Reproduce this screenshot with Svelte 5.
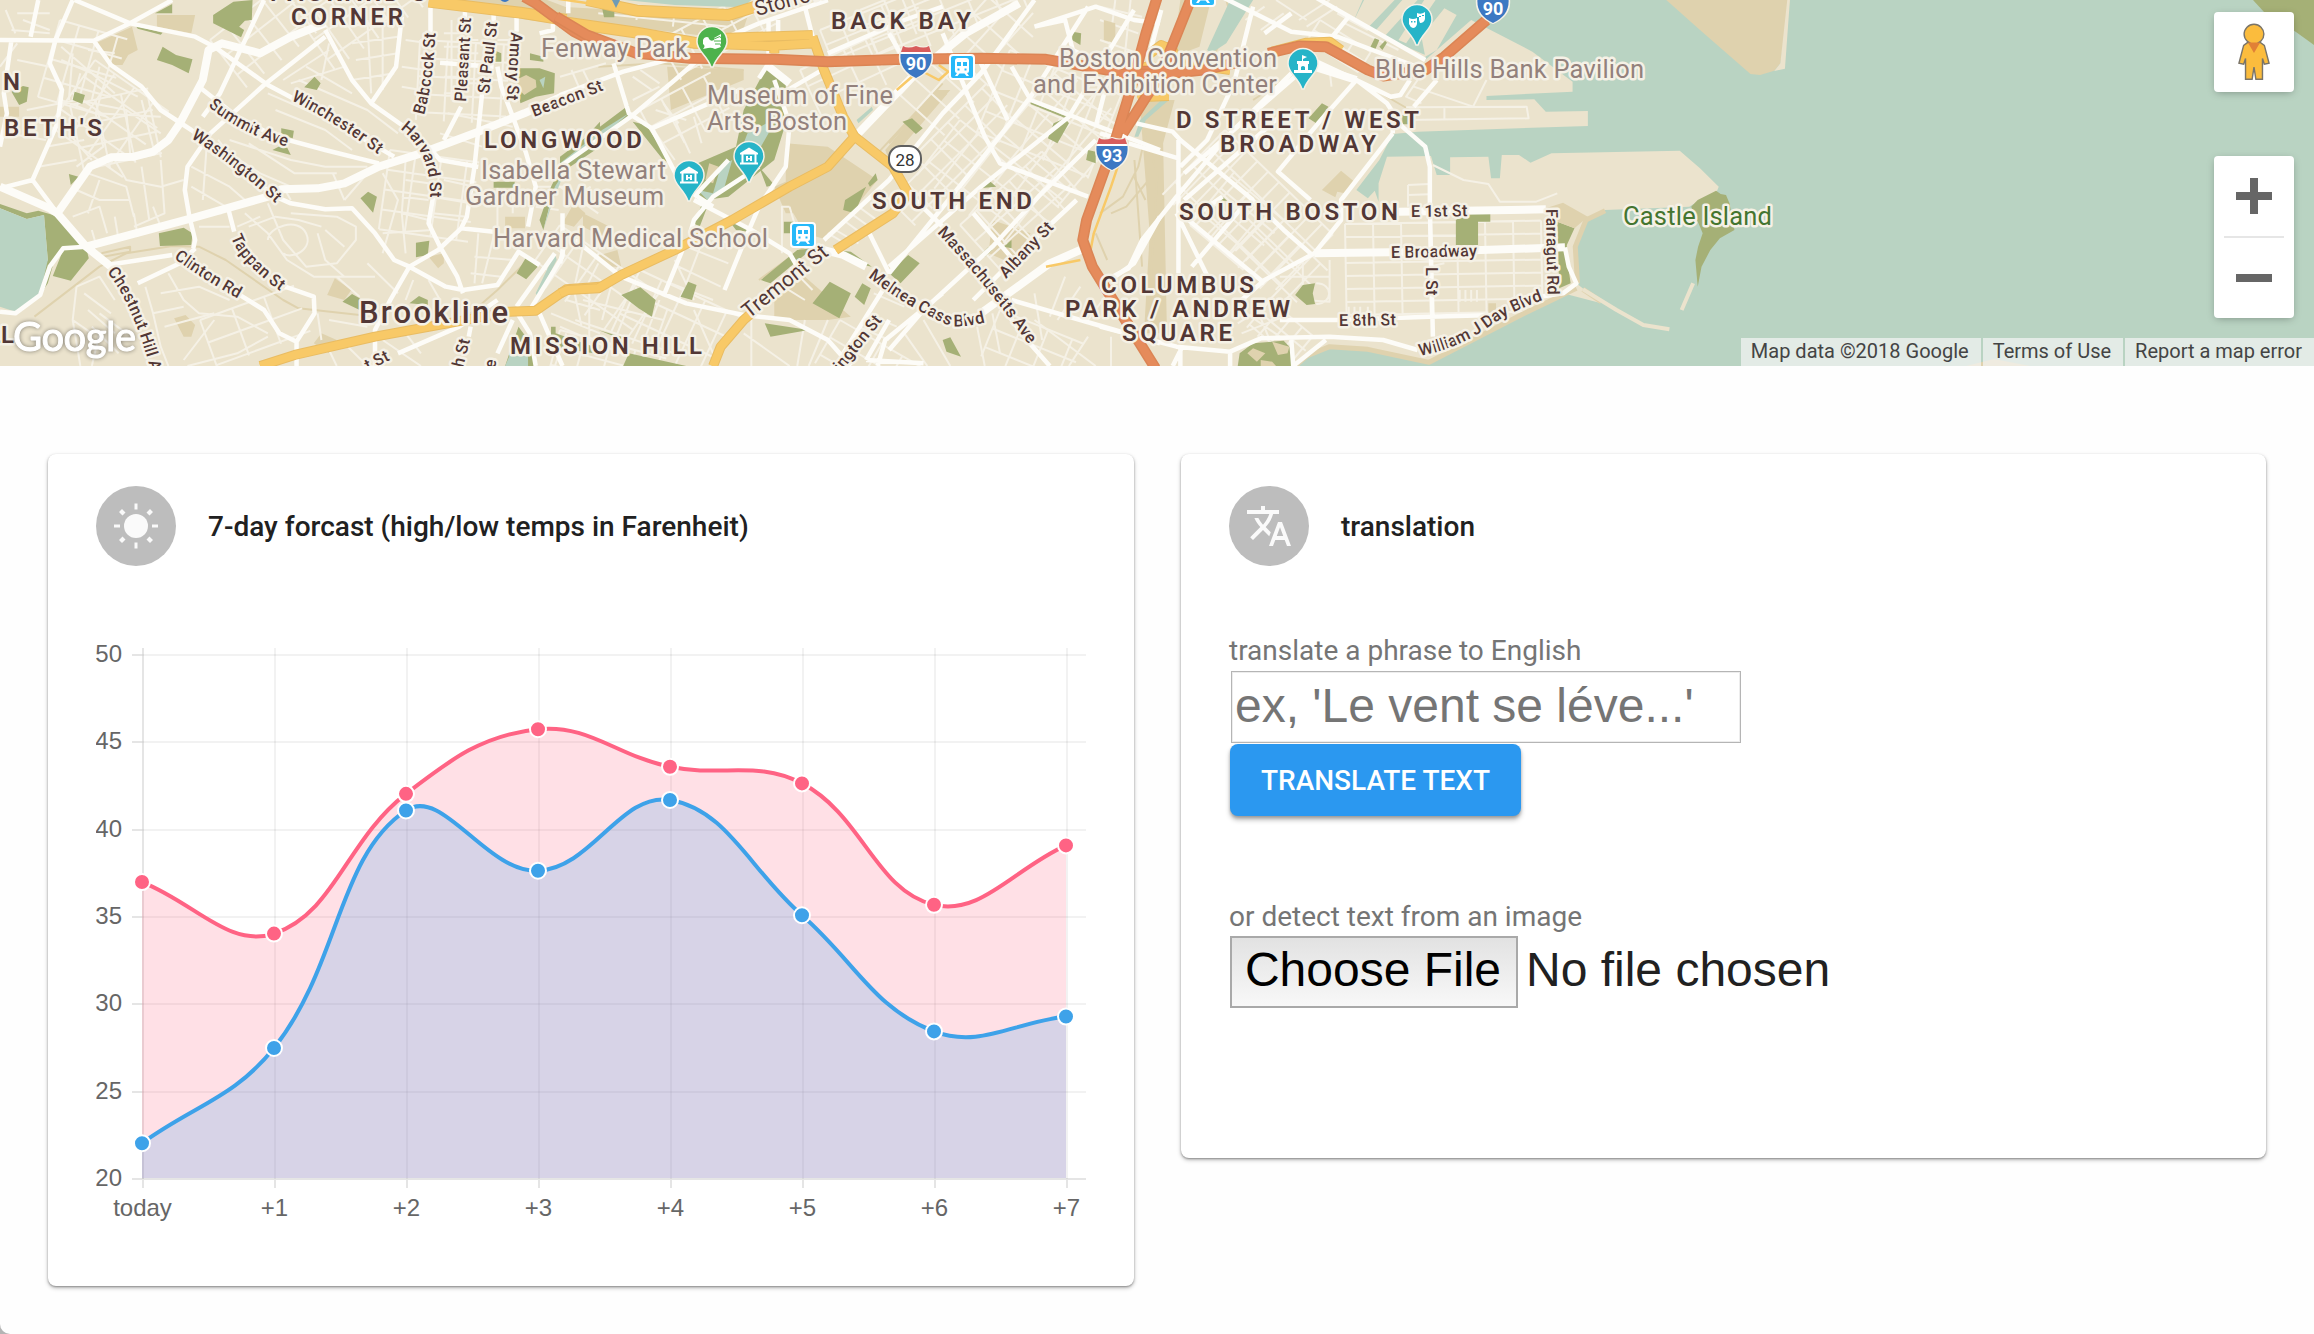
<script>
  const tiles = [
    {
      x: 0,
      beige: 'M250 130L345 80L360 150L335 165L320 195L290 195ZM410 45L510 45L500 100L410 80ZM455 955L485 945L510 975L500 1010L480 1010ZM855 885L875 835L918 870L900 900ZM1320 650h52v35h-52zM1140 20L1568 90V60L1430 0H1140ZM1120 770L1160 760V790L1145 805ZM820 1030L840 1000L880 1020L860 1060ZM1470 670L1500 610L1530 640L1500 680ZM0 320H50V350H0Z',
      parks: 'M0 612L70 640L100 632L155 650L218 735L165 745L140 790L125 850L105 885L60 930L40 940L125 780L115 645L70 657L0 625ZM138 828L165 750L225 742L232 775L185 842ZM557 45L610 5L660 0L658 60L640 62L625 80L638 90L630 112L557 70ZM425 140L460 165L503 178L493 220L450 195L410 180ZM405 40L450 12L450 40ZM355 78L425 98L420 104L360 86ZM795 262L822 230L838 250L828 270ZM735 385L768 392L765 415L735 405ZM712 450L745 430L760 465ZM30 275L60 258L75 262L70 305L50 315ZM195 275L222 285L215 312L190 300ZM415 700L480 683L503 700L500 735L418 738ZM180 522L205 530L185 555ZM942 595L962 575L985 590L975 638ZM1087 728L1122 722L1118 765L1087 772ZM895 905L920 882L940 895V930ZM1070 910L1095 888L1118 900V915ZM1350 820L1375 772L1405 800L1375 838ZM1345 205L1410 205L1450 220L1448 280L1400 290L1360 310ZM1290 545h55v18h-55zM1385 160L1420 170V185L1385 180ZM1475 480L1568 365V440L1490 500L1465 530L1440 600L1420 690L1410 660L1440 560ZM1290 150L1310 160V185H1290ZM1320 1098L1355 980L1400 1050V1098ZM1440 980h12v20l100 40v20l-112-20z',
      sand: 'M1348 240L1375 225L1400 240L1402 262L1370 285L1358 270Z',
      water: 'M0 625L70 657L115 645L125 780L105 880L40 935L0 920ZM1320 1098L1345 1030L1380 1070V1098ZM1420 690L1450 560L1500 470L1510 455L1480 500L1440 620ZM1400 880L1450 760L1455 780L1405 890ZM1410 240L1425 230L1420 265Z',
      rail: 'M90 950L260 800L330 760L450 738L520 740L590 780L740 900L780 925L940 945M265 760L340 740V755L270 770M1210 960L1300 870L1380 780',
      local:
        'M0 200L45 130M15 30L40 100M45 40H130M60 60L130 90M30 90L130 100M45 180L130 200M160 180L240 220L360 290M160 140L300 280M190 160L180 300M230 150L300 160M210 220L190 300M260 200L240 300M70 330L200 300L330 330L420 400M160 300L250 340L270 440L200 500M250 340L420 350M180 400L240 480M120 440L220 420M330 330L340 460M370 300L400 440M100 500L200 480M300 480L330 540L420 560L480 540M230 520L330 560L350 650M200 570L260 600L340 600M190 650L260 620L280 700M420 480L430 640L350 680M260 540L230 640M370 500L390 660M20 400L120 420M600 420L760 480L850 500L960 500M640 380L720 420M650 430L770 520L880 520M600 460L680 520L760 560M500 500L600 560L640 600M500 560L590 620M540 440L530 600M570 420L640 520M740 240L860 150M760 250L900 200M800 200L920 280M860 130L840 240M700 280L860 360L940 420M720 330L850 390L920 450M780 240L960 330L1040 400M900 80L1040 60M920 130L1040 110M930 180L1040 160M960 60L970 280M1000 40L1000 270M920 240L1030 220M1060 120L1120 130M1050 200L1110 210M1050 260L1100 270M1160 100L1210 100M1160 140H1210M1160 230H1210M1160 280H1200M1180 60V300M1225 120H1250M1225 160H1250M1225 200H1250M1225 250H1250M1300 120H1330M1170 340L1340 380M1150 400L1260 440M1240 560L1160 540M1130 590L1230 610M1130 640L1220 650M1060 480L1050 640L1060 760M1000 520L1040 600L1000 760M960 520L900 600M1060 540L1120 550M1050 590L1120 600M1050 640L1120 660M1000 700L1130 690M870 520L900 600M740 560L760 600M700 610L740 720L800 800L880 790L930 720L930 680L880 650L760 640M640 640L700 700L750 780L820 830L900 830M650 680L720 650L780 660L840 680M700 720C700 680 780 650 800 700S760 780 740 760M620 680L680 650M640 700L620 740M520 640L580 640M520 680H600M400 620L420 680M300 650L310 720M350 640L360 710M240 690L250 730M830 700L850 780L900 830L980 830M850 690L900 740M930 640L980 700M960 790L1040 880M880 830L940 890M380 860L400 940L420 1040L440 1098M440 820L480 900L520 940L620 950L700 1000M420 880L520 860L600 900M400 940L480 920M430 980L560 940M200 860L190 960L210 1098M200 860L260 830L300 900M220 880L290 940M230 930L300 1000M240 980L310 1060M190 960L240 1000M260 1000L240 1098M330 1000L260 940M480 1080L560 960M490 1098L620 1060L700 1010M830 940L840 1020M860 960L960 980M1000 1020L1100 1098M900 1030L960 1098M860 1050L880 1098M1060 1000L1100 1060M1080 840L1060 900M1120 840L1150 900M1250 700L1240 850M1290 710L1260 850M1240 770L1340 780M1230 820L1310 830M1400 560L1480 560M1400 620L1460 630M1300 560V680M1340 560V640M1480 900L1568 930M1500 870L1520 980M1440 940L1568 1000M1540 870V1050M1450 1098L1480 1000',
      arterial:
        'M0 565L85 540L150 640M85 540L150 370L162 270L130 190L145 120L190 0M0 120L245 122L340 70L450 0M245 122L290 195L370 260L420 330L500 390L720 590L760 610L850 628L920 625L980 700L1030 780L1070 800L1165 860L1210 870L1300 855L1355 755L1410 795M195 0L340 70L510 110L560 140L700 255L790 310L1030 470M100 0L80 110M30 120L10 280L18 340L0 440M690 0L575 280L530 350M850 110L690 255L550 400L490 500L483 570L495 650L510 720L505 745M520 260L620 350L720 410L850 450L990 490M850 90L920 240L970 310L1050 375L1120 440L1150 480L1250 500M1050 50L1035 200L970 310M1125 0V110M1150 188L1290 200M1215 20V60M1290 35V75M1350 50V95M1205 320L1160 420M1260 280L1240 500L1220 650L1205 685L1145 750L1070 800L1020 900L980 990V1098M1135 570L1120 670L1150 740L1195 830L1210 880M1205 685L1290 695M1300 200L1310 260L1340 350L1375 460L1400 560L1380 680M595 620L612 695M745 860L820 890L822 940L775 1025V1098M620 880L690 930L730 1000L775 1025M280 795L450 765M510 745L470 790L360 850M225 740L165 745L130 800L105 885L40 940L0 935M1040 1060L1200 980L1300 900M1230 980L1225 1010M1350 920L1450 760M1385 930L1470 770V640M1355 945L1385 1000L1400 1098M1410 940L1470 1098M1340 960L1300 1060M1485 0V40M1445 40V90L1410 100',
      boulevard:
        'M225 740L500 655L700 590L735 568L830 565L900 550L990 500L1100 460L1250 395L1370 340L1468 290M150 640L235 500L290 472L350 470L400 455L440 420L470 370L530 240L545 150L580 130L680 160L760 110L850 70M0 560L130 625L150 640L225 740L290 800',
      thinway: 'M1450 -5L1568 15',
      yellow: 'M680 1098L770 1065L980 1010L1170 970L1330 935L1400 932L1480 868L1568 860',
      wideyellow: 'M1120 5L1360 38L1480 60',
      red: 'M1370 -10L1400 10L1500 95L1540 118'
    },
    {
      x: 560,
      beige: 'M590 430L700 440L830 540L700 720L640 700L590 600ZM560 860L640 830L760 950L700 960L560 960ZM1130 660L1230 700L1180 790L1120 760ZM850 450L980 270L1020 270L860 480ZM0 20L490 50L470 120L100 70ZM280 200L480 210V240L290 330ZM60 640L130 680V720L60 680ZM90 770L150 750L160 800L120 800ZM560 560L600 540L640 640H590Z',
      parks: 'M0 470L180 315V350L60 470L0 510ZM190 365L225 375L290 490L270 480ZM480 330L540 200L570 210L590 250V370L560 480L440 590L380 600L350 590L360 490L460 440ZM520 500L560 555L540 560ZM740 630L745 600L800 560L770 640ZM805 550L825 520L830 540L810 560ZM895 365L920 355L948 385L930 402ZM1275 415L1290 370L1320 355L1330 370L1300 430ZM1230 305L1325 350V356L1230 312ZM860 820L910 765L940 790L890 850ZM660 910L705 845L760 880L730 955ZM770 890L790 850L812 865L795 915ZM160 885L210 862L250 900L240 950L205 925ZM315 890L335 845L357 855L345 900ZM535 970L650 990L550 1010ZM1000 1020L1020 1012L1048 1070L1010 1055ZM525 840L620 750L660 745L550 850ZM720 750L760 755L815 800L770 790ZM165 1098L180 1060L330 1098ZM350 670L370 615L385 620L365 680ZM1095 565L1120 540L1140 560ZM1340 95L1362 100L1360 135L1338 120ZM1380 450L1400 455V490L1375 480ZM585 665H610V700H585ZM110 25H142V52H115ZM1090 775L1120 740L1130 750L1110 770ZM1160 740L1180 720V745ZM100 990L160 1010V1018ZM440 660L520 700L460 690Z',
      sand: 'M380 540L390 490L415 500L400 550Z',
      water: 'M170 0H500L480 22L300 15ZM775 360L815 320L818 330L780 370ZM460 490L490 400L540 370L545 400L520 450L480 500ZM360 570L400 580L420 500L450 480L430 560L385 600ZM0 490L110 390L180 340L110 410L0 500Z',
      rail: 'M860 480L1010 280M830 460L960 300M1000 250L860 430M1430 780L1400 700M1568 500L1480 620L1440 640M1500 530L1530 600M100 200L260 190L480 210M520 840L640 740',
      local:
        'M0 230L120 190M30 210L60 290M60 210L90 280M190 230L240 270M210 210L260 250M190 300L260 260M270 310L310 370M250 330L330 360M100 40L440 80M300 30L295 80M200 20V60M250 400L300 480M300 360L340 460M350 350L370 430M0 560L100 640M30 600L80 560M60 740L40 850M100 790L60 880M140 830L110 960M200 860L150 1000M260 900L220 1020M300 780L350 900M330 740L440 790M310 800L420 860M290 850L400 900M340 700L480 740M380 700L330 850M60 900L270 960M40 960L300 1060M0 980L200 1080M280 930L240 1060M350 930L400 1060M600 620H580V760M600 620L620 700M600 800L660 870M570 850L640 900M700 700L760 740M720 690L780 730M740 660L800 710M760 640L820 690M780 620L840 670M640 960L620 1098M700 960L650 1098M480 1000L600 1098M500 960V1098M820 880L900 920M800 940L880 980M780 980L860 1020M870 860L960 920M900 1000L960 1098M950 960L1020 1098M1090 980L1110 1098M1130 940L1150 1060M1240 880L1260 1020M1320 830L1280 950M1360 860L1300 960M1240 960L1400 1098M1380 1010L1330 1098M1440 1010V1098M1450 850L1380 960',
      arterial:
        'M0 285L165 215L280 180M0 500L185 350L300 240L360 180M440 110L520 70L700 0M140 190L180 340L240 385L470 270M240 385L320 560L400 620M545 60V190L520 235M570 60V100M560 240L600 370L590 500L520 620L490 700L430 870M700 160L900 60L1000 20M690 720L860 540L1000 340L1100 220L1240 0M860 820L1100 480L1230 290L1380 20M860 800L980 680L1100 560L1330 350L1500 30M640 20L660 110M860 100L920 220M1000 100L1110 410L1150 490L1380 590M1100 190L1170 360M1180 200L1230 300L1568 450M1240 80L1320 60L1340 150L1440 210M1240 80L1400 20L1500 60L1568 70M800 680L860 820M920 590L1000 680L1220 1020L1280 1098M1180 900L1450 990L1568 1030M40 720L160 830L330 910L480 945L600 960L700 1020L760 1098M350 600L500 690L600 760L620 800M320 750L270 890M860 1050L950 930L1130 740L1250 590L1400 420M1080 640L1200 800M800 1080L950 1090M740 1060L860 840M800 1080L860 960M830 1098L850 1020L1000 880M1568 650L1500 790L1450 830M1350 600L1210 750L1080 900M440 480L350 590M520 500L400 590L350 660L340 700M1400 380L1440 200M580 280L700 200M0 790L10 740',
      boulevard:
        'M780 400L930 220L1060 100L1200 10M690 750L740 765L800 800M1100 940L1280 790L1360 750M545 200L600 250',
      thinway: 'M970 180L940 210L990 240L1015 215L990 195M940 210L880 270M1270 800L1360 780M1385 760L1395 700L1440 560L1475 440',
      yellow:
        'M0 880L20 870L100 865L160 825L300 750L450 660L600 560L700 500L770 410M660 110L690 210L740 350L770 410L870 500L910 580L870 640L720 750M500 940L480 960L420 1040L400 1098M400 115L660 105M340 130L545 138L668 130M560 140V160',
      wideyellow: 'M70 0L200 32L440 45L510 20M0 65L200 98L350 128L440 130',
      red: 'M-10 50L70 105L200 160L340 175L560 178L700 185L900 178L1100 175L1270 178L1430 210L1568 215'
    },
    {
      x: 1100,
      beige: 'M105 330L130 300L195 300L165 430L175 1000H115L130 700Z',
      parks: 'M545 355L580 310L597 320L565 370ZM930 660L960 640H1020V665H988V735H930ZM1195 665L1240 685L1220 735V770L1230 850L1200 865ZM510 885L530 855L562 850L556 880L562 912L540 915ZM360 1098L365 1060L400 1030L480 1022L503 1050L500 1098ZM790 345h15v28h-15zM705 145L718 115L730 120L718 152ZM730 140L745 122L750 128L738 150ZM312 602L320 590L332 602Z',
      sand: 'M385 1060L400 1045L432 1060L410 1085ZM450 1025L495 1040L490 1060L465 1065ZM420 1080L450 1085L460 1098H420ZM580 570L630 512L665 545L640 580L620 575L615 592ZM1165 625L1210 608L1275 650L1240 685L1195 665ZM1015 910h20v40h-20zM10 60L40 70V130L10 120ZM210 0H290L260 140L190 170Z',
      water: '',
      rail: 'M110 380L150 520L130 900M90 480L110 800M0 640L60 590L100 500L120 400M330 0L345 60L300 160M720 270L810 330M400 300L560 180',
      local:
        'M870 495L950 540L1015 552L1045 605H1140L1195 580M800 322L1115 320L1120 355L800 360M900 325V358M805 555V620M805 555L860 552M805 585L860 583M830 240L800 290L840 310M820 260L975 320L1010 240M600 210L605 260M520 60L600 0M540 80L620 20M640 70L780 150M460 0L540 60M380 60L430 20M420 90L480 40M620 40L700 90M530 780V900L600 905V780M470 830H600M565 850C610 850 610 910 565 912M860 780L780 770M860 800L900 790M940 870V905M955 870V905M970 870V905M985 870V905M650 920V960M665 920V960M680 920V960M700 920V960M0 60L100 100M0 120L100 160M0 20L110 50M40 0L20 180M80 0L60 220M0 350L60 380M370 930L470 1010M400 900L440 1010M360 970L430 920M370 1000L480 950',
      arterial:
        'M300 -20L500 95L620 110L850 210M560 -10L850 180M650 50L600 120M430 100L500 40M540 170L670 240L750 310L790 380L850 440L862 500V620L870 1010M670 240L760 290L785 285L810 240M820 320L880 240M670 240L570 370L465 515L550 600M765 400V370M765 400L630 600L630 660L560 760M500 220L340 400L200 590L110 720L75 805L0 850M95 370L190 395L210 420L400 600M75 430L205 475M205 420V820M200 640L290 850M210 640L430 850M380 610L240 800M230 660L320 590M560 760L430 840L370 900M470 960L620 960L860 950L1030 945M0 980L200 1040L340 1055L420 1015L600 1010L740 1020L830 1050M210 1040V1098M190 1098L215 1040M505 1098L590 1020M340 1055V1098M500 1020L505 1098M400 20L350 250L280 420L210 500M220 520L560 180M220 600L470 350M1215 742L1225 800L1245 850L1210 880L1150 890M550 760L480 690L380 580M160 30L130 160M230 20L215 60M0 400L60 420',
      boulevard: 'M560 760L860 755L1215 742M780 635L1165 628M560 200L670 240',
      thinway: 'M150 130L185 130L215 180L330 215M560 125L600 120L630 150',
      yellow: 'M120 170L160 135L190 150L200 180M450 155L540 128L600 125L630 150M100 300L130 290L180 288M170 210L250 195L340 210',
      wideyellow: 'M70 220L130 200L160 210',
      red: 'M50 222L170 222L270 210L370 185M440 160L520 138L590 140L650 178L700 210L740 228L850 210L900 170L1010 60M240 -10L160 220L60 400M150 -10L120 100L80 270L40 420L-35 660L-45 720L-20 800L50 930L145 1105'
    }
  ];

  // Harbour outline, in the units of the tile that starts at x = 1100.
  const harbour =
    'M560 -10L850 180L970 60L1130 155L1235 245V275L1010 288V300L1135 298L1165 335L1275 333V378L830 395L765 402L730 480L690 540L670 570L700 595L718 572L728 605V550L750 470L865 468L880 525H915V472L1015 470L1022 535H1045L1050 465H1095L1125 488L1180 460L1515 452L1568 505L1617 560L1610 580L1568 600L1540 620L1320 630L1270 655L1240 740L1245 850L1310 910L1210 880L1100 940L950 1040L860 1085L700 1045L600 1035L540 1065L510 1098H3200V-10Z';
  const piers = 'M690 0H770L690 95L660 70ZM790 0H830L735 120L710 105ZM840 110L900 25L932 45L880 150L850 170ZM880 -5H850L780 120L800 130ZM560 -10H690L660 70L850 165V190Z';
  const channels = 'M340 0H400L330 130L290 160L280 150ZM190 150L240 20L260 20L215 160ZM90 410L105 360L160 300L180 300L120 360L100 410Z';

  // Street grids: rotated rectangles filled with evenly spaced minor streets.
  const grids = [
    [860, 10, 230, 60, -22, 26, 16], [900, 95, 150, 60, -48, 22, 22], [960, 120, 130, 70, 38, 22, 26],
    [880, 190, 150, 50, -45, 24, 15], [1010, 50, 120, 90, 22, 24, 22], [990, 150, 110, 90, -50, 20, 22],
    [960, 225, 110, 60, -42, 22, 22], [660, 40, 110, 45, -28, 24, 20],
    [640, 110, 80, 50, -28, 24, 20], [800, 70, 100, 50, -25, 24, 18], [820, 30, 100, 40, -22, 22, 16],
    [560, 225, 120, 60, 35, 24, 22], [640, 270, 110, 70, 25, 24, 24], [840, 320, 100, 50, 30, 24, 20],
    [1000, 310, 90, 50, 22, 26, 20], [1225, 130, 150, 90, 44, 15, 24],
    [1190, 225, 70, 70, -50, 16, 24], [1270, 215, 80, 50, 44, 14, 22],
    [1345, 224, 196, 92, -1, 28, 13], [1270, 300, 60, 36, 40, 14, 16],
    [1320, 20, 60, 24, 32, 20, 12], [60, 20, 70, 80, 16, 20, 20],
    [300, 20, 110, 60, -35, 18, 24], [95, 60, 90, 80, 35, 24, 20], [70, 105, 80, 70, -12, 26, 22],
    [210, 40, 90, 60, -38, 22, 22], [420, 40, 90, 80, 3, 28, 18], [390, 150, 90, 80, 8, 26, 20],
    [200, 320, 100, 50, -20, 34, 24], [560, 330, 110, 40, 15, 26, 18]
  ];
  function gridPath([, , w, h, , dx, dy]) {
    let d = '';
    for (let x = 0; x <= w; x += dx) d += `M${x} 0V${h}`;
    for (let y = 0; y <= h; y += dy) d += `M0 ${y}H${w}`;
    return d;
  }

  const areaLabels = [
    ["PACKARD'S", 270, 1, 156], ['CORNER', 291, 25, 112], ['N', 3, 90, 17], ["BETH'S", 4, 136, 98],
    ['LONGWOOD', 484, 148, 158], ['BACK BAY', 831, 29, 140], ['SOUTH END', 872, 209, 160],
    ['MISSION HILL', 510, 354, 192], ['D STREET / WEST', 1176, 128, 243], ['BROADWAY', 1220, 152, 156],
    ['SOUTH BOSTON', 1179, 220, 219], ['COLUMBUS', 1101, 293, 153], ['PARK / ANDREW', 1065, 317, 225],
    ['SQUARE', 1122, 341, 110], ['LL', -12, 343, 26]
  ];
  const poiLabels = [
    ['Fenway Park', 541, 57, 147], ['Museum of Fine', 707, 104, 186], ['Arts, Boston', 707, 130, 140],
    ['Isabella Stewart', 481, 179, 185], ['Gardner Museum', 465, 205, 199], ['Harvard Medical School', 493, 247, 275],
    ['Boston Convention', 1059, 67, 218], ['and Exhibition Center', 1033, 93, 244],
    ['Blue Hills Bank Pavilion', 1375, 78, 269]
  ];
  const streetLabels = [
    ['Winchester St', 'M291 100Q335 122 379 155'], ['Summit Ave', 'M208 106Q240 134 292 148'],
    ['Washington St', 'M191 138Q235 165 285 212'], ['Babcock St', 'M424 115Q434 80 436 20'],
    ['Pleasant St', 'M466 102L472 5'], ['St Paul St', 'M489 94L499 10'], ['Amory St', 'M511 32L506 110'],
    ['Beacon St', 'M534 117L612 87'], ['Harvard St', 'M400 129Q432 152 430 200'],
    ['Tappan St', 'M231 237Q240 264 290 298'], ['Clinton Rd', 'M174 258Q200 278 246 303'],
    ['Chestnut Hill Ave', 'M107 272Q138 310 158 400'], ['Melnea Cass Blvd', 'M868 277Q905 306 948 325Q962 330 1000 318'],
    ['Massachusetts Ave', 'M937 233Q985 282 1036 355'], ['Albany St', 'M1006 279L1060 222'],
    ['ington St', 'M841 372L886 316'], ['t St', 'M368 371L410 350'], ['h St', 'M463 368L475 320'],
    ['E 1st St', 'M1411 217L1480 216'], ['E Broadway', 'M1391 258L1490 256'], ['E 8th St', 'M1339 326L1410 325'],
    ['L St', 'M1426 267V310'], ['Farragut Rd', 'M1546 209L1548 320'],
    ['William J Day Blvd', 'M1420 356Q1460 348 1490 326Q1512 310 1560 294'], ['e', 'M495 369L500 340']
  ];
  const majorStreets = [
    ['Tremont St', 'M749 319L850 238'], ['Storrow Dr', 'M757 16L860 -12']
  ];

  const pins = [
    { x: 712, y: 42, kind: 'park' }, { x: 749, y: 157, kind: 'museum' }, { x: 689, y: 176, kind: 'museum' },
    { x: 1303, y: 64, kind: 'civic' }, { x: 1417, y: 20, kind: 'theatre' }
  ];
  const stations = [[950, 55], [791, 223], [1191, -18]];
  const shields = [[900, 46, '90'], [1096, 138, '93'], [1477, -9, '90']];

  // Forecast chart
  const dayLabels = ['today', '+1', '+2', '+3', '+4', '+5', '+6', '+7'];
  const ticks = [50, 45, 40, 35, 30, 25, 20];
  const highs = [37, 34.05, 42.05, 45.75, 43.6, 42.65, 35.7, 39.1];
  const lows = [22.05, 27.5, 41.1, 37.65, 41.7, 35.1, 28.45, 29.3];
  const top = 25;
  const base = 549;
  const px = (i) => 46 + 132 * i;
  const py = (v) => base - ((v - 20) / 30) * (base - top);
  const points = (values) => values.map((v, i) => [px(i), py(v)]);

  function curve(values) {
    const p = points(values);
    const tension = 0.4;
    const ctl = p.map((c, i) => {
      const a = p[i - 1] ?? c;
      const b = p[i + 1] ?? c;
      const before = Math.hypot(c[0] - a[0], c[1] - a[1]);
      const after = Math.hypot(b[0] - c[0], b[1] - c[1]);
      const fa = (tension * before) / (before + after);
      const fb = (tension * after) / (before + after);
      return {
        prev: [c[0] - fa * (b[0] - a[0]), c[1] - fa * (b[1] - a[1])],
        next: [c[0] + fb * (b[0] - a[0]), c[1] + fb * (b[1] - a[1])]
      };
    });
    let d = `M${p[0]}`;
    for (let i = 1; i < p.length; i++) d += `C${ctl[i - 1].next} ${ctl[i].prev} ${p[i]}`;
    return d;
  }
  const series = [
    { name: 'high', values: highs },
    { name: 'low', values: lows }
  ];
</script>

<main class="page">
  <section class="map">
    <svg class="canvas" viewBox="0 0 2314 366" width="2314" height="366">
      <rect class="land" width="2314" height="366" />

      {#each tiles as t}
        <g transform="translate({t.x} 0) scale(.38265 .33333)">
          <path class="beige" d={t.beige} />
          <path class="rail" d={t.rail} />
        </g>
      {/each}

      {#each grids as g}
        <path class="local" transform="translate({g[0]} {g[1]}) rotate({g[4]})" d={gridPath(g)} />
      {/each}

      <g transform="translate(1100 0) scale(.38265 .33333)">
        <path class="water" d={harbour} />
        <path class="water" d={channels} />
        <path class="land" d={piers} />
        <path class="shore" d="M1262 868L1310 905M1245 865L1100 945L860 1087L700 1048L600 1040L540 1068L510 1098M1320 632L1270 660L1242 740L1248 850" />
        <path class="causeway" d="M1262 868L1350 930L1420 975L1488 988M1550 850L1520 930" />
        <path class="beige" d="M1480 0L1568 90L1700 222L1725 225L1762 212L1778 190L1803 0Z" />
        <path class="land" d="M1803 0L1790 206L1762 213L1778 190L1796 0Z" />
        <path class="park" d="M1610 572L1622 582L1636 585L1645 610L1658 690L1620 715L1595 750L1572 800L1562 860L1556 780L1563 740L1575 700L1568 680L1545 620L1562 600Z" />
      </g>
      <path class="park" d="M2253 0L2264 12L2296 32L2314 45V0Z" />
      <path class="beige" d="M1966 366L1994 359L2030 366Z" />

      {#each tiles as t}
        <g transform="translate({t.x} 0) scale(.38265 .33333)">
          <path class="local" d={t.local} />
          <path class="park" d={t.parks} />
          <path class="beige" d={t.sand} />
          <path class="water" d={t.water} />
        </g>
      {/each}
      {#each tiles as t}
        <g transform="translate({t.x} 0) scale(.38265 .33333)">
          <path class="arterial" d={t.arterial} />
          <path class="boulevard" d={t.boulevard} />
        </g>
      {/each}
      {#each tiles as t}
        <g transform="translate({t.x} 0) scale(.38265 .33333)">
          <path class="thinway" d={t.thinway} />
          <path class="yellow-edge" d={t.yellow} />
          <path class="yellow" d={t.yellow} />
          <path class="wide-edge" d={t.wideyellow} />
          <path class="wide" d={t.wideyellow} />
        </g>
      {/each}
      {#each tiles as t}
        <g transform="translate({t.x} 0) scale(.38265 .33333)">
          <path class="red-edge" d={t.red} />
          <path class="red" d={t.red} />
        </g>
      {/each}

      {#each streetLabels as [name, d], i}
        <path id="street-{i}" {d} fill="none" />
        <text class="street"><textPath href="#street-{i}">{name}</textPath></text>
      {/each}
      {#each majorStreets as [name, d], i}
        <path id="major-{i}" {d} fill="none" />
        <text class="street major"><textPath href="#major-{i}">{name}</textPath></text>
      {/each}
      {#each poiLabels as [name, x, y, w]}
        <text class="poi" {x} {y} textLength={w}>{name}</text>
      {/each}
      <text class="poi green" x="1623" y="225" textLength="149">Castle Island</text>
      {#each areaLabels as [name, x, y, w]}
        <text class="area" {x} {y} textLength={w}>{name}</text>
      {/each}
      <text class="area town" x="359" y="323" textLength="149">Brookline</text>

      <path class="sign-blue" d="M497 -4H513Q508 2 505 2Q501 2 497 -4Z" />
      <path class="sign-slate" d="M610 -4H622L616 8Z" />

      {#each shields as [x, y, n]}
        <g transform="translate({x} {y})">
          <path class="shield-halo" d="M3 0Q8 3 16 0Q24 3 29 0L32 8Q34 24 16 32Q-2 24 0 8Z" />
          <path class="shield-top" d="M3 0Q8 3 16 0Q24 3 29 0L31 6H1Z" />
          <path class="sign-blue" d="M.5 8H31.5Q33 24 16 32Q-1 24 .5 8Z" />
          <text class="shield-text" x="16" y="24">{n}</text>
        </g>
      {/each}
      <rect class="route" x="889" y="146" width="32" height="26" rx="12" />
      <text class="route-text" x="905" y="165.500">28</text>

      {#each stations as [x, y]}
        <g transform="translate({x} {y})">
          <rect class="station" x="0" y="0" width="24" height="24" rx="3" />
          <path class="white" fill-rule="evenodd" d="M8 3H16Q19 3 19 6V16Q19 18 17 18L19 21H16.500L14.500 18.500H9.500L7.500 21H5L7 18Q5 18 5 16V6Q5 3 8 3ZM7 7V11H11V7ZM13 7V11H17V7ZM7.500 13.500V15.500H9.500V13.500ZM14.500 13.500V15.500H16.500V13.500Z" />
        </g>
      {/each}

      {#each pins as p}
        <g transform="translate({p.x} {p.y})">
          <path class="pin" class:leaf={p.kind === 'park'} d="M0 -15.500A15 15 0 0 1 15 0C15 9 5 13 1 25H-1C-5 13 -15 9 -15 0A15 15 0 0 1 0 -15.500Z" />
          {#if p.kind === 'museum'}
            <path class="white" fill-rule="evenodd" d="M0 -9.500L9 -4V-2.500H7.500V5.500H9V7.500H-9V5.500H-7.500V-2.500H-9V-4ZM-5.500 -2.500V5.500H5.500V-2.500Z" />
            <path class="white" d="M-3 -1H-1V1H1V-1H3V4H1V2.500H-1V4H-3Z" />
          {:else if p.kind === 'civic'}
            <path class="white" fill-rule="evenodd" d="M-1 -9L4 -7L0 -5V-3H6V0H5V6H9V9H-9V6H-5V0H-6V-3H-1ZM-2 6V3Q0 1 2 3V6Z" />
          {:else if p.kind === 'theatre'}
            <path class="white" fill-rule="evenodd" d="M0 -7Q4 -5 8 -8V-1Q7 3 3 3L2 0V-3H0ZM2 -4V-3H4V-4ZM5 -5V-4H7V-5Z" />
            <path class="white" fill-rule="evenodd" d="M-8 -2Q-4 0 0 -2V4Q-1 8 -4 8Q-7 7 -8 4ZM-6 1V2.500H-4.500V1ZM-3 1V2.500H-1.500V1Z" />
          {:else}
            <path class="white" d="M-9 -2Q-8 -5 -5 -5Q-3 -5 -3 -3Q-1 0 2 -2L2 -4L9 -8V-6L8 -4H9V1L8 3L9 5L3 7Q-1 5 -4 6L-9 7Q-6 4 -9 2Z" />
            <path class="leaf-line" d="M2 -3L8 -5.500M2 -1H9M3 2H8" />
          {/if}
        </g>
      {/each}

      <text class="google" x="13" y="351" textLength="123">Google</text>
    </svg>

    <button class="control pegman" aria-label="Street view">
      <svg viewBox="0 0 34 60" width="34" height="60">
        <path class="body" d="M10 20L6 23L1 42L6 43L8 37V59H15L17 46L19 59H26V37L28 43L33 42L28 23L24 20Z" />
        <circle class="body" cx="17" cy="11" r="10.500" />
        <path class="scarf" d="M10.500 20H23.500L17 31Z" />
      </svg>
    </button>
    <div class="control zoomer">
      <button aria-label="Zoom in"><svg viewBox="0 0 36 36" width="36" height="36"><path d="M14 0H22V14H36V22H22V36H14V22H0V14H14Z" /></svg></button>
      <hr />
      <button aria-label="Zoom out"><svg viewBox="0 0 36 36" width="36" height="36"><path d="M0 14H36V22H0Z" /></svg></button>
    </div>
    <footer class="credits">
      <span>Map data ©2018 Google</span>
      <span>Terms of Use</span>
      <span>Report a map error</span>
    </footer>
  </section>

  <div class="cards">
    <article class="card forecast">
      <header>
        <span class="avatar">
          <svg viewBox="0 0 48 48" width="48" height="48">
            <circle cx="24" cy="24" r="12" />
            <path d="M22.500 1.500H25.500V7.500H22.500ZM22.500 40.500H25.500V46.500H22.500ZM2 22.500H8V25.500H2ZM40 22.500H46V25.500H40ZM10 7L13.500 10.500L10.500 13.500L7 10ZM38 7L41 10L37.500 13.500L34.500 10.500ZM10.500 34.500L13.500 37.500L10 41L7 38ZM37.500 34.500L41 38L38 41L34.500 37.500Z" />
          </svg>
        </span>
        <h2>7-day forcast (high/low temps in Farenheit)</h2>
      </header>
      <svg class="chart" viewBox="0 0 1014 600" width="1014" height="600">
        {#each ticks as t, i}
          <rect class:axis={t === 20} class="grid" x="46" y={Math.round(py(t)) - 1} width="944" height="2" />
          <rect class="grid axis" x="36" y={Math.round(py(t)) - 1} width="10" height="2" />
          <text class="tick end" x="26" y={Math.round(py(t)) + 7}>{t}</text>
        {/each}
        {#each dayLabels as label, i}
          <rect class:axis={i === 0} class="grid" x={px(i)} y="18" width="2" height="531" />
          <rect class="grid axis" x={px(i)} y="550" width="2" height="8" />
          <text class="tick" x={px(i) + 0.5} y="586">{label}</text>
        {/each}
        {#each series as s}
          <path class="fill {s.name}" d="{curve(s.values)}V{base - 1}H{px(0)}Z" />
        {/each}
        {#each [...series].reverse() as s}
          <path class="line {s.name}" d={curve(s.values)} />
        {/each}
        {#each series as s}
          {#each points(s.values) as [x, y]}
            <circle class="dot {s.name}" cx={x} cy={y} r="8" />
          {/each}
        {/each}
      </svg>
    </article>

    <article class="card translation">
      <header>
        <span class="avatar">
          <svg viewBox="0 0 24 24" width="48" height="48">
            <path d="M12.870 15.070l-2.540-2.510.030-.030c1.740-1.940 2.980-4.170 3.710-6.530H17V4h-7V2H8v2H1v1.990h11.170C11.500 7.920 10.440 9.750 9 11.350 8.070 10.320 7.300 9.190 6.690 8h-2c.730 1.630 1.730 3.170 2.980 4.560l-5.090 5.020L4 19l5-5 3.110 3.110.760-2.040zM18.500 10h-2L12 22h2l1.120-3h4.750L21 22h2l-4.500-12zm-2.620 7l1.620-4.330L19.120 17h-3.240z" />
          </svg>
        </span>
        <h2>translation</h2>
      </header>
      <div class="form">
        <label for="phrase">translate a phrase to English</label>
        <input id="phrase" type="text" placeholder="ex, 'Le vent se léve...'" />
        <button class="submit">TRANSLATE TEXT</button>
        <p>or detect text from an image</p>
        <div class="file">
          <button>Choose File</button>
          <span>No file chosen</span>
        </div>
      </div>
    </article>
  </div>
</main>

<style>
  :global(body) {
    background: #b4b4b4;
    font-family: Roboto, 'Liberation Sans', sans-serif;
  }
  .page {
    height: 1334px;
    overflow: hidden;
    border-bottom-left-radius: 10px;
    background: #fefefe;
  }
  button {
    border: 0;
    padding: 0;
    font: inherit;
  }

  /* Map */
  .map {
    position: relative;
    height: 366px;
    overflow: hidden;
  }
  .canvas {
    display: block;
  }
  .canvas path {
    vector-effect: non-scaling-stroke;
    stroke-linejoin: round;
  }
  .land { fill: #ebe3cd; }
  .beige { fill: #dfd2ae; }
  .park { fill: #a5b076; }
  .water { fill: #b9d3c2; }
  .rail { fill: none; stroke: #dfd2ae; stroke-width: 2; }
  .local { fill: none; stroke: #f5f1e6; stroke-width: 2; }
  .arterial { fill: none; stroke: #fdfcf8; stroke-width: 4.5; }
  .boulevard { fill: none; stroke: #fdfcf8; stroke-width: 8; }
  .shore { fill: none; stroke: #dfd2ae; stroke-width: 5; }
  .causeway { fill: none; stroke: #ebe3cd; stroke-width: 4; }
  .thinway { fill: none; stroke: #f8c967; stroke-width: 2.5; }
  .yellow-edge { fill: none; stroke: #e9bc62; stroke-width: 10; }
  .yellow { fill: none; stroke: #f8c967; stroke-width: 8; }
  .wide-edge { fill: none; stroke: #e9bc62; stroke-width: 12; }
  .wide { fill: none; stroke: #f8c967; stroke-width: 10; }
  .red-edge { fill: none; stroke: #db8555; stroke-width: 11; }
  .red { fill: none; stroke: #e58b5b; stroke-width: 8; }

  .canvas text {
    paint-order: stroke;
    stroke: #f5f1e6;
    stroke-width: 5px;
    stroke-linejoin: round;
  }
  .street { font-size: 16.5px; font-weight: 500; fill: #523735; }
  .major { font-size: 21px; font-weight: 400; }
  .poi { font-size: 25.5px; fill: #93817c; }
  .green { fill: #447530; }
  .area { font-size: 24px; font-weight: 600; fill: #523735; }
  .town { font-size: 31px; font-weight: 500; }
  .canvas .google {
    font-family: Lato, sans-serif;
    font-size: 40px;
    fill: #fff;
    stroke: #fff;
    stroke-width: 1px;
    filter: drop-shadow(0 0 2px rgba(0, 0, 0, 0.45));
  }

  .sign-blue { fill: #3c78c3; }
  .sign-slate { fill: #6f9bb5; }
  .shield-halo { fill: #fff; stroke: #f5f1e6; stroke-width: 2; }
  .shield-top { fill: #d85c5c; }
  .canvas .shield-text { font-size: 18px; font-weight: 700; fill: #fff; text-anchor: middle; stroke: none; }
  .route { fill: #fff; stroke: #5f5f5f; stroke-width: 2; }
  .canvas .route-text { font-size: 17px; fill: #333; text-anchor: middle; stroke: none; }
  .station { fill: #27b9f9; stroke: #fff; stroke-width: 2; }
  .white { fill: #fff; }
  .pin { fill: #26b4c8; stroke: #f5f1e6; stroke-width: 1.5; }
  .pin.leaf { fill: #4db24c; }
  .leaf-line { fill: none; stroke: #4db24c; stroke-width: 1; }

  .control {
    position: absolute;
    right: 20px;
    width: 80px;
    display: flex;
    align-items: center;
    justify-content: center;
    border-radius: 4px;
    background: #fff;
    box-shadow: 0 2px 8px -2px rgba(0, 0, 0, 0.35);
  }
  .pegman { top: 12px; height: 80px; }
  .pegman svg { width: 32px; }
  .body { fill: #fbbc3d; stroke: #7a7468; stroke-width: 1.5; }
  .scarf { fill: #e18036; }
  .zoomer { top: 156px; height: 162px; flex-direction: column; }
  .zoomer button {
    flex: 1;
    display: flex;
    align-items: center;
    background: none;
    fill: #666;
  }
  .zoomer hr { width: 60px; height: 2px; margin: 0; border: 0; background: #e6e6e6; }
  .credits {
    position: absolute;
    right: 0;
    bottom: 0;
    display: flex;
    gap: 2px;
    height: 28px;
    font-size: 20px;
    line-height: 27px;
    color: #444;
  }
  .credits span { padding: 0 12px 0 10px; background: rgba(245, 245, 245, 0.7); white-space: nowrap; }

  /* Cards */
  .cards {
    display: grid;
    grid-template-columns: 1086px 1085px;
    gap: 47px;
    align-items: start;
    padding: 88px 48px 48px;
  }
  .card {
    box-sizing: border-box;
    padding: 32px 48px 0;
    border-radius: 8px;
    background: #fff;
    box-shadow: 0 2px 4px rgba(0, 0, 0, 0.26), 0 1px 2px rgba(0, 0, 0, 0.3);
  }
  .forecast { height: 832px; }
  .translation { height: 704px; }
  header { display: flex; align-items: center; gap: 32px; height: 80px; }
  .avatar {
    display: flex;
    align-items: center;
    justify-content: center;
    width: 80px;
    height: 80px;
    border-radius: 50%;
    background: #bdbdbd;
    fill: #fafafa;
  }
  h2 { margin: 0; padding-top: 2px; font-size: 28px; font-weight: 500; line-height: 40px; color: #212121; }

  .chart { display: block; margin-top: 64px; }
  .grid { fill: rgba(0, 0, 0, 0.05); }
  .grid.axis { fill: rgba(0, 0, 0, 0.1); }
  .tick { font-family: 'Liberation Sans', sans-serif; font-size: 24px; fill: #666; text-anchor: middle; }
  .tick.end { text-anchor: end; }
  .fill.high { fill: rgba(255, 99, 132, 0.2); }
  .fill.low { fill: rgba(54, 162, 235, 0.2); }
  .line { fill: none; stroke-width: 4; }
  .line.high { stroke: #ff6384; }
  .line.low { stroke: #3ea2e9; }
  .dot { stroke: #fff; stroke-width: 2; }
  .dot.high { fill: #ff6384; }
  .dot.low { fill: #3ea2e9; }

  .form {
    display: flex;
    flex-direction: column;
    align-items: flex-start;
    padding-top: 65px;
    font-size: 28px;
    line-height: 40px;
    color: #757575;
  }
  .form label { height: 40px; }
  .form input {
    box-sizing: border-box;
    width: 510px;
    height: 72px;
    margin-left: 2px;
    padding: 0 3px 3px;
    border: 1px solid #b5b5b5;
    box-shadow: inset 0 0 0 1px #ededed;
    background: #fff;
    font: 48px 'Liberation Sans', sans-serif;
  }
  .form input::placeholder { color: #757575; }
  .submit {
    box-sizing: border-box;
    height: 72px;
    margin: 1px 0 0 1px;
    padding: 2px 31px 0;
    border-radius: 8px;
    background: #2b98f0;
    box-shadow: 0 4px 5px rgba(0, 0, 0, 0.25), 0 2px 3px rgba(0, 0, 0, 0.2);
    font-weight: 500;
    color: #fff;
  }
  .form p { height: 39px; margin: 81px 0 0; }
  .file {
    display: flex;
    align-items: center;
    gap: 8px;
    margin-left: 1px;
    font: 48px 'Liberation Sans', sans-serif;
    color: #212121;
  }
  .file button {
    box-sizing: border-box;
    width: 288px;
    height: 72px;
    padding: 0 2px 6px 0;
    border: 2px solid #a9a9a9;
    background: linear-gradient(#e2e2e2, #f8f8f8);
    color: #000;
  }
  .file span { padding-bottom: 6px; }
</style>
